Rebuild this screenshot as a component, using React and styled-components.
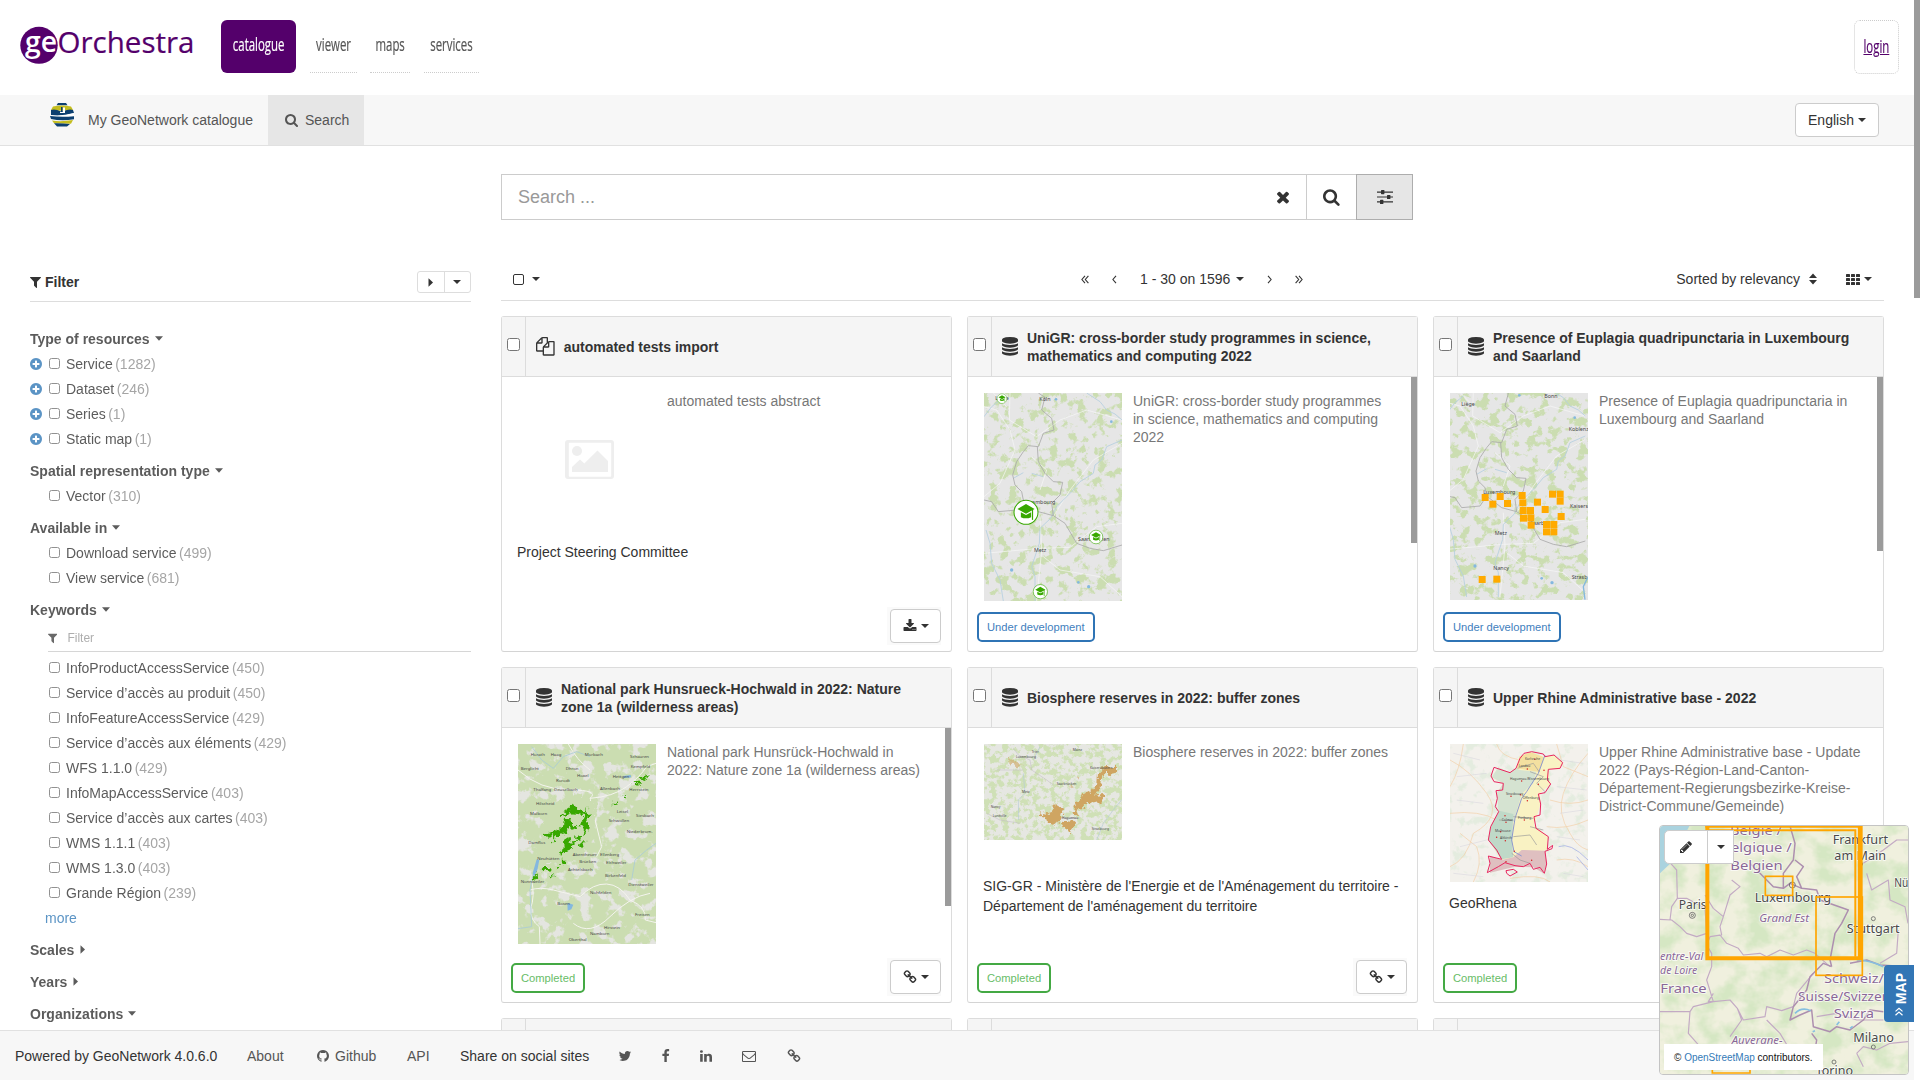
import React from "react";
import styled, { createGlobalStyle } from "styled-components";

const Global = createGlobalStyle`
  *, *::before, *::after { box-sizing: border-box; }
  html, body { margin: 0; padding: 0; overflow: hidden; background: #fff; }
  body { font: 14px/20px "Liberation Sans", Arial, sans-serif; color: #333; }
  button { font: inherit; color: inherit; cursor: pointer; }
  a { text-decoration: none; color: inherit; }
  svg { display: block; flex: none; }
`;

/* ---------- icons ---------- */

const PATHS = {
  search: "M1216 832q0-185-131.5-316.5t-316.5-131.5-316.5 131.5-131.5 316.5 131.5 316.5 316.5 131.5 316.5-131.5 131.5-316.5zm512 832q0 52-38 90t-90 38q-54 0-90-38l-343-342q-179 124-399 124-143 0-273.5-55.5t-225-150-150-225-55.5-273.5 55.5-273.5 150-225 225-150 273.5-55.5 273.5 55.5 225 150 150 225 55.5 273.5q0 220-124 399l343 343q37 37 37 90z",
  times: "M1490 1322q0 40-28 68l-136 136q-28 28-68 28t-68-28l-294-294-294 294q-28 28-68 28t-68-28l-136-136q-28-28-28-68t28-68l294-294-294-294q-28-28-28-68t28-68l136-136q28-28 68-28t68 28l294 294 294-294q28-28 68-28t68 28l136 136q28 28 28 68t-28 68l-294 294 294 294q28 28 28 68z",
  filter: "M1595 295q17 41-14 70l-493 493v742q0 42-39 59-13 5-25 5-27 0-45-19l-256-256q-19-19-19-45v-486l-493-493q-31-29-14-70 17-39 59-39h1280q42 0 59 39z",
  database: "M896 768q237 0 443-43t325-127v170q0 69-103 128t-280 93.5-385 34.5-385-34.5-280-93.5-103-128v-170q119 84 325 127t443 43zm0 768q237 0 443-43t325-127v170q0 69-103 128t-280 93.5-385 34.5-385-34.5-280-93.5-103-128v-170q119 84 325 127t443 43zm0-384q237 0 443-43t325-127v170q0 69-103 128t-280 93.5-385 34.5-385-34.5-280-93.5-103-128v-170q119 84 325 127t443 43zm0-1152q208 0 385 34.5t280 93.5 103 128v128q0 69-103 128t-280 93.5-385 34.5-385-34.5-280-93.5-103-128v-128q0-69 103-128t280-93.5 385-34.5z",
  files: "M1696 384q40 0 68 28t28 68v1216q0 40-28 68t-68 28h-960q-40 0-68-28t-28-68v-288h-544q-40 0-68-28t-28-68v-672q0-40 20-88t48-76l408-408q28-28 76-48t88-20h416q40 0 68 28t28 68v328q68-40 128-40h416zm-544 213l-299 299h299v-299zm-640-384l-299 299h299v-299zm196 647l316-316v-416h-384v416q0 40-28 68t-68 28h-416v640h512v-256q0-40 20-88t48-76zm956 804v-1152h-384v416q0 40-28 68t-68 28h-416v640h896z",
  plus: "M1344 960v-128q0-26-19-45t-45-19h-256v-256q0-26-19-45t-45-19h-128q-26 0-45 19t-19 45v256h-256q-26 0-45 19t-19 45v128q0 26 19 45t45 19h256v256q0 26 19 45t45 19h128q26 0 45-19t19-45v-256h256q26 0 45-19t19-45zm320-64q0 209-103 385.5t-279.5 279.5-385.5 103-385.5-103-279.5-279.5-103-385.5 103-385.5 279.5-279.5 385.5-103 385.5 103 279.5 279.5 103 385.5z",
  link: "M1520 1216q0-40-28-68l-208-208q-28-28-68-28-42 0-72 32 3 3 19 18.5t21.5 21.5 15 19 13 25.5 3.5 27.5q0 40-28 68t-68 28q-15 0-27.5-3.5t-25.5-13-19-15-21.5-21.5-18.5-19q-33 31-33 73 0 40 28 68l206 207q27 27 68 27 40 0 68-26l147-146q28-28 28-67zm-703-705q0-40-28-68l-206-207q-28-28-68-28-39 0-68 27l-147 146q-28 28-28 67 0 40 28 68l208 208q27 27 68 27 42 0 72-31-3-3-19-18.5t-21.5-21.5-15-19-13-25.5-3.5-27.5q0-40 28-68t68-28q15 0 27.5 3.5t25.5 13 19 15 21.5 21.5 18.5 19q33-31 33-73zm895 705q0 120-85 203l-147 146q-83 83-203 83-121 0-204-85l-206-207q-83-83-83-203 0-123 88-209l-88-88q-86 88-208 88-120 0-204-84l-208-208q-84-84-84-204t85-203l147-146q83-83 203-83 121 0 204 85l206 207q83 83 83 203 0 123-88 209l88 88q86-88 208-88 120 0 204 84l208 208q84 84 84 204z",
  twitter: "M1684 408q-67 98-162 167 1 14 1 42 0 130-38 259.5t-115.5 248.5-184.5 210.5-258 146-323 54.5q-271 0-496-145 35 4 78 4 225 0 401-138-105-2-188-64.5t-114-159.5q33 5 61 5 43 0 85-11-112-23-185.5-111.5t-73.5-205.5v-4q68 38 146 41-66-44-105-115t-39-154q0-88 44-163 121 149 294.5 238.5t371.5 99.5q-8-38-8-74 0-134 94.5-228.5t228.5-94.5q140 0 236 102 109-21 205-78-37 115-142 178 93-10 186-50z",
  facebook: "M1343 12v264h-157q-86 0-116 36t-30 108v189h293l-39 296h-254v759h-306v-759h-255v-296h255v-218q0-186 104-288.5t277-102.5q147 0 228 12z",
  linkedin: "M477 625v991h-330v-991h330zm21-306q1 73-50.5 122t-135.5 49h-2q-82 0-132-49t-50-122q0-74 51.5-122.5t134.5-48.5 133 48.5 51 122.5zm1166 729v568h-329v-530q0-105-40.5-164.5t-126.5-59.5q-63 0-105.5 34.5t-63.5 85.5q-11 30-11 81v553h-329q2-399 2-647t-1-296l-1-48h329v144h-2q20-32 41-56t56.5-52 87-43.5 114.5-15.5q171 0 275 113.5t104 332.5z",
  mail: "M1664 1504v-768q-32 36-69 66-268 206-426 338-51 43-83 67t-86.5 48.5-102.5 24.5h-2q-48 0-102.5-24.5t-86.5-48.5-83-67q-158-132-426-338-37-30-69-66v768q0 13 9.5 22.5t22.5 9.5h1472q13 0 22.5-9.5t9.5-22.5zm0-1051v-24.5l-.5-13-3-12.5-5.5-9-9-7.5-14-2.5h-1472q-13 0-22.5 9.5t-9.5 22.5q0 168 147 284 193 152 401 317 6 5 35 29.5t46 37.5 44.5 31.5 50.5 27.5 43 9h2q20 0 43-9t50.5-27.5 44.5-31.5 46-37.5 35-29.5q208-165 401-317 54-43 100.5-115.5t46.5-131.5zm128-37v1088q0 66-47 113t-113 47h-1472q-66 0-113-47t-47-113v-1088q0-66 47-113t113-47h1472q66 0 113 47t47 113z",
  github: "M896 128q209 0 385.5 103t279.5 279.5 103 385.5q0 251-146.5 451.5t-378.5 277.5q-27 5-40-7t-13-30q0-3 .5-76.5t.5-134.5q0-97-52-142 57-6 102.5-18t94-39 81-66.5 53-105 20.5-150.5q0-119-79-206 37-91-8-204-28-9-81 11t-92 44l-38 24q-93-26-192-26t-192 26q-16-11-42.5-27t-83.5-38.5-85-13.5q-45 113-8 204-79 87-79 206 0 85 20.5 150t52.5 105 80.5 67 94 39 102.5 18q-39 36-49 103-21 10-45 15t-57 5-65.5-21.5-55.5-62.5q-19-32-48.5-52t-49.5-24l-20-3q-21 0-29 4.5t-5 11.5 9 14 13 12l7 5q22 10 43.5 38t31.5 51l10 23q13 38 44 61.5t67 30 69.5 7 55.5-3.5l23-4q0 38 .5 88.5t.5 54.5q0 18-13 30t-40 7q-232-77-378.5-277.5t-146.5-451.5q0-209 103-385.5t279.5-279.5 385.5-103z",
  pencil: "M491 1536l91-91-235-235-91 91v107h128v128h107zm523-928q0-22-22-22-10 0-17 7l-542 542q-7 7-7 17 0 22 22 22 10 0 17-7l542-542q7-7 7-17zm-54-192l416 416-832 832h-416v-416zm683 96q0 53-37 90l-166 166-416-416 166-165q36-38 90-38 53 0 91 38l235 234q37 39 37 91z",
  download: "M1344 1344q0-26-19-45t-45-19-45 19-19 45 19 45 45 19 45-19 19-45zm256 0q0-26-19-45t-45-19-45 19-19 45 19 45 45 19 45-19 19-45zm128-224v320q0 40-28 68t-68 28h-1472q-40 0-68-28t-28-68v-320q0-40 28-68t68-28h465l135 136q58 56 136 56t136-56l136-136h464q40 0 68 28t28 68zm-325-569q17 41-14 70l-448 448q-18 19-45 19t-45-19l-448-448q-31-29-14-70 17-39 59-39h256v-448q0-26 19-45t45-19h256q26 0 45 19t19 45v448h256q42 0 59 39z",
};

const BOXES = {
  database: "128 0 1536 1792",
  filter: "192 0 1408 1792",
  plus: "128 0 1536 1792",
  facebook: "430 0 1024 1792",
  search: "64 0 1664 1792",
};

function Icon({ name, size = 14 }) {
  const box = BOXES[name] || "0 0 1792 1792";
  const w = (Number(box.split(" ")[2]) / 1792) * size;
  return (
    <svg width={w} height={size} viewBox={box} fill="currentColor">
      <path d={PATHS[name]} />
    </svg>
  );
}

const Caret = ({ dir = "down", bold }) =>
  dir === "down" ? (
    <svg width="8" height={bold ? 5 : 4} viewBox={bold ? "0 0 8 5" : "0 0 8 4"} fill="currentColor"><path d={bold ? "M0 .3h8L4 4.700z" : "M0 0h8L4 4z"} /></svg>
  ) : (
    <svg width="7" height="9" viewBox="0 0 7 9" fill="currentColor"><path d="M1.500 .3v8.400L6 4.500z" /></svg>
  );

const Angle = ({ right, double }) => (
  <svg width={double ? 8 : 5} height="9" viewBox={double ? "0 0 8 9" : "0 0 5 9"} fill="none" stroke="currentColor" strokeWidth="1.1">
    <g transform={right ? `translate(${double ? 8 : 5} 0) scale(-1 1)` : undefined}>
      <path d="M4 .8L.9 4.5L4 8.2" />
      {double && <path d="M7.4 .8L4.3 4.5L7.4 8.2" />}
    </g>
  </svg>
);

const SortIcon = () => (
  <svg width="8" height="12" viewBox="0 0 8 12" fill="currentColor"><path d="M0 5L4 .6L8 5zM0 7h8L4 11.4z" /></svg>
);

const GridIcon = () => (
  <svg width="14" height="11" viewBox="0 0 14 11" fill="currentColor">
    {[0, 4, 8].map((y) => [0, 5, 10].map((x) => <rect key={x + "-" + y} x={x} y={y} width="4" height="3" rx=".6" />))}
  </svg>
);

const SlidersIcon = () => (
  <svg width="16" height="14" viewBox="0 0 16 14" fill="currentColor">
    <path d="M0 1.500h16v1.200H0zM0 6.400h16v1.200H0zM0 11.300h16v1.200H0z" />
    <rect x="4" y="0" width="3.400" height="4.200" rx=".6" />
    <rect x="10" y="4.900" width="3.400" height="4.200" rx=".6" />
    <rect x="3" y="9.800" width="3.400" height="4.200" rx=".6" />
  </svg>
);

const PictureIcon = () => (
  <svg width="49" height="39" viewBox="0 0 49 39" fill="#eee">
    <path fillRule="evenodd" d="M3 0h43a3 3 0 0 1 3 3v33a3 3 0 0 1-3 3H3a3 3 0 0 1-3-3V3a3 3 0 0 1 3-3zM3.8 3v33a.7.7 0 0 0 .7.7h41a.7.7 0 0 0 .7-.7V3.5a.7.7 0 0 0-.7-.7h-41a.7.7 0 0 0-.7.7z" />
    <circle cx="12" cy="11" r="5" />
    <path d="M7 32v-5l8-7.5 4.3 4L32.5 10.5L43 21v11z" />
  </svg>
);

const GeorchestraLogo = () => (
  <svg width="176" height="50" viewBox="0 -8 176 50" fontFamily='"Open Sans", sans-serif' overflow="visible">
    <ellipse cx="19" cy="21.3" rx="18.7" ry="18.5" fill="#54006b" />
    <text x="5" y="28" fontSize="28" fontWeight="600" fill="#fff" textLength="32" lengthAdjust="spacingAndGlyphs">ge</text>
    <text x="37.5" y="28.600" fontSize="29" fill="#54006b" stroke="#54006b" strokeWidth=".2" textLength="137" lengthAdjust="spacingAndGlyphs">Orchestra</text>
  </svg>
);

const GlobeLogo = () => (
  <svg width="26" height="24" viewBox="0 0 26 24">
    <path d="M9 0h8l1.5 2.2h-11z" fill="#0c3f70" />
    <path d="M4 3.500Q13 1.500 22 3.500L24 7Q13 8.500 2 7z" fill="#c4bd1e" />
    <path d="M2 7Q6 5.500 12 8.500h2Q20 5.500 24 7L25 10Q14 14 2 12.300z" fill="#0c3f70" />
    <path d="M2 12Q12 13.500 25 10V13.500Q13 14 1 14z" fill="#fff" />
    <path d="M1 13Q12 14.500 25 13.300V16.200Q13 18.500 2 16z" fill="#0c3f70" />
    <path d="M3 17.500Q12 19 24 17L22 20.800Q12 20.500 5 20.200z" fill="#c4bd1e" />
    <path d="M5 20.200Q13 20 21 21L18 23.500H8z" fill="#0c3f70" />
    <path d="M12 4h1.500v6H12z" fill="#0c3f70" /><path d="M14 4.500h2v5.500h-5v-1h3z" fill="#fff" />
  </svg>
);

/* ---------- map drawings ---------- */

function Terrain({ id, box, base, cover, freq, seed, gain = 14, cut = 7.2, children }) {
  const [x, y, width, height] = box;
  return (
    <svg width={width / 3} height={height / 3} viewBox={box.join(" ")} fontFamily='"Noto Sans", sans-serif'>
      <filter id={id} x="0" y="0" width="100%" height="100%" colorInterpolationFilters="sRGB">
        <feTurbulence type="fractalNoise" baseFrequency={freq} numOctaves="4" seed={seed} />
        <feColorMatrix values={`0 0 0 0 ${cover[0]} 0 0 0 0 ${cover[1]} 0 0 0 0 ${cover[2]} ${gain} 0 0 0 ${-cut}`} />
      </filter>
      <filter id={`${id}-rough`} x="-5%" y="-5%" width="110%" height="110%">
        <feTurbulence type="fractalNoise" baseFrequency="0.07" numOctaves="2" seed={seed} result="n" />
        <feDisplacementMap in="SourceGraphic" in2="n" scale="26" xChannelSelector="R" yChannelSelector="G" />
      </filter>
      <rect x={x} y={y} width={width} height={height} fill={base} />
      <rect x={x} y={y} width={width} height={height} filter={`url(#${id})`} />
      {children}
    </svg>
  );
}

const FOREST = [0.796, 0.867, 0.694];

const Cap = ({ x, y, r }) => (
  <g transform={`translate(${x} ${y}) scale(${r / 36})`}>
    <circle r="35" fill="#fff" stroke="#38a800" strokeWidth="3" />
    <path d="M0-24L25-10L0 4L-25-10zM-15 0L0 8L15 0V14Q0 21-15 14z" fill="#38a800" />
    <path d="M19-9V22" stroke="#38a800" strokeWidth="3.500" />
  </g>
);

const Tags = ({ items, size = 16 }) =>
  items.map(([t, x, y]) => (
    <text key={t + x} x={x} y={y} fontSize={size} fill="#444">{t}</text>
  ));

const Borders = () => (
  <g fill="none" strokeLinejoin="round">
    <g stroke="#f7f7f7" strokeWidth="2">
      <path d="M72 290L110 300L150 360L165 420L120 520L72 560M150 249L148 330L230 380L300 330L380 300L486 330M240 540L260 480L215 440M240 620L245 720L230 873M72 730L240 715L330 712L410 650L486 640M250 740L300 780L420 800L486 860M280 620L330 540L400 450L486 400M100 249L140 290" />
    </g>
    <g stroke="#b4cfe0" strokeWidth="2.500">
      <path d="M72 320L95 290L120 270M380 249L420 275L440 300L465 312L486 330M486 390L440 410L425 450L405 465L400 490L360 515L335 545L290 590L272 625L240 655L238 700L215 770L225 800L225 873M78 660L90 700L95 760L120 810L130 873M160 505L190 488M215 490L250 500" />
    </g>
    <g stroke="#aaa" strokeWidth="2.500">
      <path d="M235 249L255 262L245 300L275 325L282 360L250 370L235 410L205 407L190 425L170 455L158 495L165 525L185 545L190 570L170 600L115 605L95 575L72 570M190 570L235 605L280 617L275 580L300 555L308 517L280 515L255 490L235 455L232 410M280 617L315 640L350 700L390 715L430 722L486 705" />
    </g>
    <g fill="#84b8df"><circle cx="288" cy="268" r="4" /><circle cx="454" cy="335" r="4" /><circle cx="155" cy="780" r="5" /><circle cx="355" cy="817" r="4" /><circle cx="386" cy="830" r="5" /></g>
  </g>
);

const UniThumb = () => (
  <Terrain id="t-uni" box={[72, 249, 414, 624]} base="#e6e6e6" cover={FOREST} freq="0.034" seed="4" gain={9} cut={4.700}>
    <Borders />
    <Tags items={[["Liège", 106, 271], ["Köln", 238, 272], ["Luxembourg", 190, 581], ["Saarbrücken", 354, 693], ["Metz", 222, 726]]} />
    <Cap x={126} y={266} r={15} /><Cap x={198} y={607} r={37} /><Cap x={408} y={681} r={21} /><Cap x={241} y={845} r={22} />
  </Terrain>
);

const SQUARES = [[196, 563], [241, 560], [219, 583], [263, 581], [307, 557], [309, 579], [310, 602], [332, 602], [311, 625], [333, 624], [334, 646], [353, 577], [376, 599], [398, 553], [421, 553], [421, 574], [424, 620], [380, 644], [402, 644], [380, 666], [402, 666], [187, 809], [231, 808]];

const EuplagiaThumb = () => (
  <Terrain id="t-eup" box={[90, 249, 414, 621]} base="#e6e6e6" cover={FOREST} freq="0.034" seed="11" gain={9} cut={4.700}>
    <g transform="translate(10 -12)"><Borders /></g>
    <Tags items={[["Liège", 124, 288], ["Bonn", 373, 264], ["Koblenz", 446, 362], ["Luxembourg", 190, 551], ["Kaisers", 450, 593], ["Saarbr", 330, 645], ["Metz", 224, 674], ["Nancy", 220, 780], ["Strasb", 455, 806]]} />
    {SQUARES.map(([x, y]) => <rect key={`${x}-${y}`} x={x - 11} y={y - 11} width="21" height="21" fill="#ffaa00" />)}
    <path d="M504 800L490 830L495 869" stroke="#84b8df" strokeWidth="4" fill="none" />
  </Terrain>
);

const ParkThumb = () => (
  <Terrain id="t-park" box={[84, 252, 414, 600]} base="#cbddb1" cover={[0.894, 0.898, 0.878]} freq="0.026" seed="23" gain={9} cut={4.800}>
    <g fill="none" stroke="#f4f4ee" strokeWidth="3">
      <path d="M120 690Q150 680 190 690T270 710Q310 670 350 672T420 720Q470 740 466 780L498 788M125 660Q135 710 122 745Q120 780 148 800L150 852M84 330Q150 390 240 390T300 415Q320 500 335 560L320 590M300 415Q370 410 410 380T470 320L498 310M250 790Q300 830 360 770T480 700M235 252Q260 300 300 330" />
    </g>
    <path d="M180 440L260 400L320 430L310 520L270 590L200 610L150 620L150 520z" fill="#cbddb1" filter="url(#t-park-rough)" />
    <g fill="none" stroke="#a9cbd6" strokeWidth="2.500"><path d="M125 260L155 300L190 325L220 290L260 275L300 290M145 600L130 640L120 690L125 800L84 806M425 660L435 600L470 570L498 550" /></g>
    <path d="M140 598L148 600L142 630L132 650L128 640zM232 728L250 734L244 748L233 752zM400 348L422 345L424 352L402 354z" fill="#84b8df" />
    <g fill="#38a800" filter="url(#t-park-rough)">
      <path d="M240 440L258 436L262 448L280 455L292 440L285 465L240 460L215 470L212 462L236 452zM222 476L245 478L246 492L260 498L252 510L238 500L232 520L210 525L188 545L192 525L170 530L162 522L195 514L218 500zM288 460L302 462L292 480L296 500L290 520L276 525L284 500L262 498L275 488zM230 534L246 545L280 540L250 552L236 570L212 588L218 562L216 545zM255 530L270 525L276 538L258 540zM280 545L290 542L272 566L264 560zM214 602L232 602L226 612L214 612zM165 618L184 618L180 628L190 630L168 632L156 640L155 626zM142 640L146 650L130 668L124 658zM175 642L195 648L180 650zM198 622L212 620L200 628zM428 366L454 370L452 374L430 372zM452 358L474 346L470 356L458 362zM366 432L384 424L378 436zM400 410L408 404L408 412z" />
    </g>
    <Tags size={13} items={[["Horath", 122, 287], ["Haag", 182, 289], ["Morbach", 284, 288], ["Berglicht", 92, 331], ["Dhron", 227, 330], ["Schauren", 420, 294], ["Kempfeld", 422, 324], ["Hoxel", 261, 350], ["Rorodt", 198, 365], ["Hettgen", 368, 353], ["Thalfang", 130, 393], ["Deuselbach", 192, 394], ["Allenbach", 330, 390], ["Herrstein", 418, 392], ["Hilscheid", 138, 435], ["Malborn", 120, 465], ["Leisel", 380, 459], ["Schwollen", 356, 485], ["Siesbach", 438, 470], ["Niederbrom.", 410, 519], ["Damflos", 115, 553], ["Neuhütten", 142, 600], ["Abentheuer", 248, 588], ["Brücken", 268, 609], ["Achtelsbach", 234, 634], ["Ellenberg", 330, 588], ["Elchweiler", 348, 611], ["Birkenfeld", 345, 650], ["Nonnweiler", 92, 668], ["Dienstweiler", 415, 679], ["Nohfelden", 300, 703], ["Bosen", 202, 734], ["Freisen", 435, 767], ["Hirstein", 342, 807], ["Namborn", 300, 825], ["Oberthal", 236, 843]]} />
  </Terrain>
);

const ReserveThumb = () => (
  <Terrain id="t-res" box={[72, 252, 414, 288]} base="#e6e7e2" cover={[0.812, 0.878, 0.714]} freq="0.055" seed="8" gain={7} cut={3.200}>
    <g fill="none" stroke="#b7ccd6" strokeWidth="2"><path d="M190 340L195 400L175 420L176 480M486 418L460 450L430 490L410 540M220 300L240 260" /></g>
    <g fill="none" stroke="#c0b8c4" strokeWidth="1.500"><path d="M160 265L175 285L210 300L215 330L260 360L280 375M110 330L190 330M80 460L120 480L180 490M290 475L360 475" /></g>
    <g fill="#cfa562" filter="url(#t-res-rough)">
      <path d="M438 318L444 325L452 320L468 322L468 338L450 342L438 335L426 352L422 385L408 405L385 432L355 450L350 468L340 465L345 440L335 432L358 425L365 405L400 388L412 370L414 340zM400 405L432 402L425 425L404 430L392 420zM285 430L296 436L308 455L300 485L285 494L264 490L258 470L238 468L242 456L262 460L278 455zM312 482L330 485L345 482L342 500L330 518L316 510L306 495z" />
      <path d="M148 290L158 296L155 312L148 308zM160 305L185 312L175 322L160 318zM352 355l8-6v8zM330 382l12 4-8 4z" opacity=".6" />
    </g>
    <Tags size={10} items={[["Luxembourg", 168, 294], ["Trier", 215, 278], ["Kaiserslautern", 390, 328], ["Saarbrücken", 290, 374], ["Metz", 186, 398], ["Nancy", 92, 444], ["Lunéville", 98, 471], ["Strasbourg", 395, 509], ["Mainz", 338, 272], ["Haguenau", 306, 477]]} />
  </Terrain>
);

const RhineThumb = () => (
  <Terrain id="t-rhine" box={[60, 252, 414, 414]} base="#f3f1ec" cover={[0.894, 0.925, 0.875]} freq="0.03" seed="15" gain={6} cut={3.200}>
    <g fill="none" stroke="#f3cfa6" strokeWidth="2">
      <path d="M60 300Q120 330 170 400T130 520Q110 600 60 620M100 252Q90 330 60 380M60 460Q150 450 200 480M130 666Q160 610 140 560L90 520M474 280Q420 340 400 400T420 520Q440 560 474 570M380 252L400 320L474 350M360 420Q420 440 474 420M350 500Q410 510 474 480M380 600Q430 590 474 620M200 252Q210 290 270 300M360 666Q330 640 240 655" />
    </g>
    <g fill="none" stroke="#d5d3dc" strokeWidth="1.500"><path d="M70 280L150 300M80 350L170 340M80 420L160 430M90 560L170 540M390 300L460 310M380 380L470 390M390 460L460 450M380 530L450 540M70 640L160 650M400 640L460 650" /></g>
    <path d="M205 322L240 338L258 325L268 290L300 276L345 292L372 285L398 308L388 328L355 328L362 372L330 400L332 432L312 495L355 530L350 570L320 575L252 595L215 600L175 540L182 500L208 455L200 400L220 370L185 352z" fill="#f9f2c3" />
    <path d="M205 322L240 338L258 325L270 330L318 335L310 370L275 402L258 460L252 485L208 480L205 450L200 400L220 370L185 352z" fill="#d5e3d1" />
    <path d="M208 452L250 462L246 550L250 592L215 598L175 540L182 500z" fill="#bfd9c8" />
    <path d="M268 290L300 276L343 292L328 336L262 325z" fill="#f3e0a0" />
    <path d="M180 588L215 600L250 592L275 570L345 572L350 612L340 640L310 622L255 620L180 638z" fill="#dfbfc0" />
    <path d="M345 285L325 340L290 395L275 415L255 475L245 540L252 575L275 588" fill="none" stroke="#8c98cf" strokeWidth="3" />
    <path d="M300 500L340 510M250 470L310 475M300 335L340 350L320 370L345 395M250 530L300 525L320 555M262 325L310 310L328 336M245 580L270 600L300 610M207 480L250 482" fill="none" stroke="#999" strokeWidth="2" />
    <path d="M282 280L305 275L340 282L345 290L372 285L398 308L390 325L355 328L352 360L362 372L345 398L325 402L332 432L330 465L312 470L318 505L355 530L352 568L368 556L366 566L345 574L350 612L343 640L330 622L310 628L300 610L280 620L255 617L225 608L205 620L172 638L180 610L175 588L215 598L200 570L175 540L182 500L206 455L196 440L202 415L198 392L218 390L220 370L192 365L183 348L192 322L240 338L258 325L270 295zM228 632L250 628L262 636L240 648L230 640z" fill="none" stroke="#e8265f" strokeWidth="3" />
    <path d="M386 560Q420 545 474 600M440 590L474 630" fill="none" stroke="#a9b4e6" strokeWidth="2.500" />
    <g fill="#d21f1f">{[[275, 363], [243, 409], [271, 404], [292, 422], [325, 373], [342, 331], [292, 327], [314, 298], [225, 467], [228, 487], [283, 480], [212, 515], [200, 532], [226, 542], [253, 574], [228, 605], [305, 601]].map(([x, y]) => <circle key={x + "_" + y} cx={x} cy={y} r="2.200" />)}</g>
    <Tags size={10} items={[["Haguenau-Wissembourg", 240, 360], ["Karlsruhe", 285, 300], ["Strasbourg", 228, 404], ["Offenburg", 278, 418], ["Colmar", 215, 482], ["Freiburg", 264, 478], ["Mulhouse", 195, 515], ["Landau", 266, 322], ["Altkirch", 210, 538]]} />
  </Terrain>
);

const Halo = ({ x, y, w, size = 40, color = "#4a4a4a", italic, children }) => (
  <text x={x} y={y} fontSize={size} textLength={w} lengthAdjust="spacingAndGlyphs" fill={color}
    fontStyle={italic ? "italic" : "normal"} stroke="#fff" strokeOpacity=".8" strokeWidth="5" paintOrder="stroke">{children}</text>
);

const MapDrawing = () => (
  <Terrain id="t-map" box={[30, 18, 744, 744]} base="#f0f0de" cover={[0.835, 0.905, 0.765]} freq="0.014 0.016" seed="6" gain={3.200} cut={1.250}>
    <path d="M30 18H118L95 62L70 100L62 130L30 160z" fill="#aad3df" />
    <g fill="none" stroke="#c3aac4" strokeWidth="3.500" strokeLinejoin="round">
      <path d="M62 130L80 150L82 235L110 235L165 265L170 340L140 350L110 340L90 320L65 300L30 298M82 235L65 260L60 300M165 225L190 265L220 290L210 320L215 345L180 350L170 375L185 400L185 440L170 480L190 545L175 545L190 520M220 290L240 225L270 200L245 180M180 350L210 345L230 370L265 385L280 405L330 400L350 410L390 390L430 405L470 390L495 400L540 440M490 460L440 520L430 560L395 572L350 560L345 590L280 600L262 565L240 540L190 545L130 560L120 575L30 575M262 565L275 600L240 650M120 575L115 640L150 680M350 600L390 640L420 690M650 160L665 210L715 180L720 240L765 260L774 310M640 130L700 90L740 60L774 60M745 330L740 400L690 430M620 700L640 680L680 690L720 670L774 665M620 700L640 740M500 590L560 580L620 600L700 600" />
    </g>
    <g fill="none" stroke="#ad8faf" strokeWidth="4.500" strokeLinejoin="round">
      <path d="M300 130L330 160L370 200L400 205L420 190L455 205L500 210L510 240L595 270L575 310L555 340L540 420L545 440M400 205L400 160L430 120L435 70L420 18M455 205L440 170L460 140L435 120M545 440L520 430L480 470L470 510L430 560L420 600L450 585L485 570L490 620L540 635L560 620L600 630L640 600L660 570L700 575M485 640L500 660L495 690L520 762M600 430L650 420L690 435L774 440" />
    </g>
    <g fill="none" stroke="#85bfe0" strokeWidth="5"><path d="M435 580Q455 560 482 572M620 420Q660 420 700 440M488 635L495 632M560 615L568 605M600 625l8-6M740 600l8-8" /></g>
    <Halo x={240} y={44} w={156} color="#8a6897">België /</Halo>
    <Halo x={243} y={97} w={182} color="#8a6897">elgique /</Halo>
    <Halo x={241} y={149} w={157} color="#8a6897">Belgien</Halo>
    <Halo x={548} y={73} w={166}>Frankfurt</Halo>
    <Halo x={553} y={120} w={155}>am Main</Halo>
    <Halo x={733} y={202} w={42}>Nü</Halo>
    <Halo x={314} y={247} w={229}>Luxembourg</Halo>
    <Halo x={86} y={267} w={84}>Paris</Halo>
    <Halo x={328} y={306} w={149} size={34} italic color="#8a6897">Grand Est</Halo>
    <Halo x={590} y={340} w={159}>Stuttgart</Halo>
    <Halo x={30} y={421} w={130} size={34} italic color="#8a6897">entre-Val</Halo>
    <Halo x={30} y={462} w={112} size={34} italic color="#8a6897">de Loire</Halo>
    <Halo x={31} y={518} w={139} color="#8a6897">France</Halo>
    <Halo x={522} y={490} w={180} color="#8a6897">Schweiz/</Halo>
    <Halo x={444} y={542} w={290} color="#8a6897">Suisse/Svizzera</Halo>
    <Halo x={551} y={594} w={121} color="#8a6897">Svizra</Halo>
    <Halo x={610} y={667} w={122}>Milano</Halo>
    <Halo x={245} y={673} w={153} size={34} italic color="#8a6897">Auvergne-</Halo>
    <Halo x={497} y={765} w={112}>Torino</Halo>
    <g fill="none" stroke="#666" strokeWidth="2.500">
      <circle cx="127" cy="286" r="9" /><circle cx="127" cy="286" r="3.500" /><circle cx="427" cy="195" r="9" />
      <circle cx="670" cy="296" r="6" /><circle cx="670" cy="681" r="6" /><circle cx="552" cy="726" r="6" /><circle cx="633" cy="132" r="5" />
    </g>
    <g fill="none" stroke="#ffa500">
      <path d="M172 12V415H632V12" strokeWidth="12" /><path d="M166 20H632" strokeWidth="6" />
      <path d="M172 31H616V410" strokeWidth="6" /><path d="M626 18V415" strokeWidth="5" />
      <rect x="346" y="169" width="82" height="57" strokeWidth="5" />
      <rect x="498" y="231" width="139" height="235" strokeWidth="5" />
      <path d="M187 740V759H300V740" strokeWidth="5" />
    </g>
  </Terrain>
);

/* ---------- page frame ---------- */

const Screen = styled.div`
  display: grid;
  grid-template-columns: 1fr 6px;
  width: 1920px;
  height: 1080px;
  overflow: hidden;
  background: #fff;
`;
const Page = styled.div`
  display: flex;
  flex-direction: column;
  min-width: 0;
  height: 1080px;
  position: relative;
`;
const ScrollThumb = styled.div`
  width: 6px;
  flex: none;
  height: ${(p) => p.$h}px;
  background: #9b9b9b;
`;

const TopBar = styled.header`
  flex: none;
  height: 95px;
  display: flex;
  align-items: flex-start;
  padding: 20px 15px 0 20px;
`;
const LogoLink = styled.a`
  margin-top: -4px;
  width: 201px;
`;
const TopLink = styled.a`
  width: ${(p) => p.$w}px;
  height: 53px;
  margin-right: ${(p) => p.$gap}px;
  display: flex;
  justify-content: center;
  padding-top: 12px;
  border-radius: ${(p) => (p.$active ? "6px" : "0")};
  background: ${(p) => (p.$active ? "#54006b" : "transparent")};
  color: ${(p) => (p.$active ? "#fff" : "#555")};
  border-bottom: ${(p) => (p.$active ? "0" : "1px dotted #ccc")};
`;
const Narrow = styled.span`
  font: 18px/24px "Open Sans", sans-serif;
  white-space: nowrap;
  display: block;
  transform: scaleX(0.635);
  -webkit-text-stroke: 0.2px currentColor;
`;
const Login = styled.a`
  margin-left: auto;
  width: 45px;
  height: 54px;
  border: 1px dotted #ccc;
  border-radius: 6px;
  display: flex;
  justify-content: center;
  padding-top: 13px;
  color: #54006b;
  text-decoration: underline;
`;

const NavBar = styled.nav`
  flex: none;
  height: 51px;
  background: #f7f7f7;
  border-bottom: 1px solid #e1e1e1;
  display: flex;
  align-items: stretch;
  padding: 0 35px 0 49px;
  color: #555;
`;
const Brand = styled.a`
  display: flex;
  gap: 13px;
  width: 219px;
  padding-top: 8px;
  line-height: 34px;
`;
const NavTab = styled.a`
  display: flex;
  align-items: center;
  gap: 7px;
  width: 96px;
  padding-left: 17px;
  background: #e6e6e6;
`;
const Btn = styled.button`
  display: flex;
  align-items: center;
  justify-content: center;
  gap: ${(p) => p.$gap ?? 4}px;
  width: ${(p) => p.$w}px;
  height: 34px;
  padding: 0;
  border: 1px solid #ccc;
  border-radius: 4px;
  background: #fff;
  color: #333;
`;
const LangSlot = styled.div`
  margin-left: auto;
  padding-top: 8px;
`;

const Main = styled.main`
  flex: 1;
  min-height: 0;
  overflow: hidden;
`;
const SearchRow = styled.div`
  display: flex;
  width: 912px;
  height: 46px;
  margin: 28px 0 40px 501px;
`;
const SearchInput = styled.div`
  flex: 1;
  display: flex;
  align-items: center;
  justify-content: space-between;
  border: 1px solid #ccc;
  padding: 0 14px 0 16px;
  font-size: 18px;
  color: #999;
  svg { color: #333; }
`;
const SearchBtn = styled.button`
  width: ${(p) => p.$w}px;
  display: flex;
  align-items: center;
  justify-content: center;
  padding: 0;
  background: ${(p) => (p.$on ? "#e6e6e6" : "#fff")};
  border: 1px solid ${(p) => (p.$on ? "#adadad" : "#ccc")};
  border-left-width: ${(p) => (p.$on ? 1 : 0)}px;
  border-right-width: ${(p) => (p.$on ? 1 : 0)}px;
`;

const Columns = styled.div`
  display: grid;
  grid-template-columns: 441px 1383px;
  column-gap: 30px;
  padding-left: 30px;
`;

/* ---------- facets ---------- */

const FilterHead = styled.div`
  height: 42px;
  padding-top: 3px;
  border-bottom: 1px solid #ddd;
  display: flex;
  align-items: center;
  gap: 4px;
  font-weight: bold;
`;
const MiniGroup = styled.div`
  margin-left: auto;
  display: flex;
  width: 54px;
  height: 22px;
  border: 1px solid #ddd;
  border-radius: 3px;
`;
const MiniBtn = styled.span`
  flex: 1;
  display: flex;
  align-items: center;
  justify-content: center;
  & + & { border-left: 1px solid #ddd; }
`;
const Facets = styled.div`
  padding-top: 17px;
  opacity: 0.8;
`;
const FacetTitle = styled.div`
  height: 25px;
  margin-top: 7px;
  display: flex;
  align-items: center;
  gap: 5px;
  font-weight: bold;
`;
const FacetItem = styled.label`
  height: 25px;
  display: flex;
  align-items: center;
  white-space: pre;
`;
const Toggle = styled.span`
  width: 19px;
  color: #337ab7;
`;
const Check = styled.input.attrs({ type: "checkbox" })`
  width: ${(p) => p.$s || 11}px;
  height: ${(p) => p.$s || 11}px;
  margin: 0 ${(p) => (p.$s ? 0 : 6)}px 0 0;
  flex: none;
`;
const Count = styled.span`
  color: #8f8f8f;
  padding-left: 2.5px;
`;
const FacetFilter = styled.div`
  height: 30px;
  padding-top: 2px;
  margin: 0 0 3px 18px;
  border-bottom: 1px solid #ccc;
  display: flex;
  align-items: center;
  gap: 10px;
  font-size: 12px;
  color: #999;
  svg { color: #444; }
`;
const More = styled.a`
  display: block;
  height: 25px;
  line-height: 27px;
  padding-left: 15px;
  color: #337ab7;
`;

/* ---------- results ---------- */

const Toolbar = styled.div`
  height: 41px;
  padding: 0 12px 2px 12px;
  border-bottom: 1px solid #ddd;
  display: grid;
  grid-template-columns: 568px 1fr auto;
  align-items: center;
`;
const Group = styled.div`
  display: flex;
  align-items: center;
  gap: ${(p) => p.$gap}px;
`;
const SelectAll = styled.span`
  width: 11px;
  height: 11px;
  border: 1px solid #333;
  border-radius: 2px;
`;
const Cards = styled.div`
  margin-top: 15px;
  display: grid;
  grid-template-columns: repeat(3, 451px);
  gap: 15px;
`;
const CardBox = styled.article`
  height: 336px;
  display: flex;
  flex-direction: column;
  border: 1px solid #dcdcdc;
  border-bottom-color: #d4d4d4;
  border-radius: 3px;
  background: #fff;
`;
const CardHead = styled.div`
  flex: none;
  height: 60px;
  display: flex;
  background: #f5f5f5;
  border-bottom: 1px solid #dcdcdc;
`;
const CheckCell = styled.div`
  width: 24px;
  border-right: 1px solid #dcdcdc;
  padding: 21px 0 0 5px;
  line-height: 0;
`;
const CardTitle = styled.h3`
  flex: 1;
  margin: 0;
  display: flex;
  align-items: center;
  gap: 9px;
  padding: 0 25px 0 10px;
  font-size: 14px;
  line-height: 18px;
`;
const CardBody = styled.div`
  flex: 1;
  min-height: 0;
  display: flex;
  justify-content: space-between;
`;
const CardContent = styled.div`
  padding: 16px 0 0 16px;
`;
const Media = styled.div`
  display: flex;
  align-items: flex-start;
  gap: 11px;
  height: ${(p) => p.$h}px;
`;
const Thumb = styled.div`
  width: 138px;
  flex: none;
`;
const NoThumb = styled.div`
  width: 138px;
  height: 133px;
  display: flex;
  align-items: center;
  padding-left: 47px;
`;
const Abstract = styled.p`
  margin: -1px 0 0;
  width: 262px;
  line-height: 18px;
  color: #777;
`;
const Org = styled.div`
  margin-left: -1px;
  width: 420px;
`;
const CardFoot = styled.div`
  flex: none;
  height: 45px;
  padding: 0 10px 6px 9px;
  display: flex;
  justify-content: space-between;
  align-items: flex-end;
`;
const Badge = styled.span`
  height: 30px;
  margin-bottom: 3px;
  padding: 0 8px;
  border: 2px solid ${(p) => (p.$done ? "#44a944" : "#2f74b5")};
  border-radius: 5px;
  color: ${(p) => (p.$done ? "#68bd68" : "#3f80bd")};
  font-size: 11.2px;
  line-height: 26px;
`;
const LinkSlot = styled.div`
  margin-left: auto;
  background: #fafafa;
  padding: 2px 0 2px 3px;
`;

/* ---------- footer and map ---------- */

const Footer = styled.footer`
  flex: none;
  height: 50px;
  background: #f7f7f7;
  border-top: 1px solid #e1e1e1;
  display: flex;
  align-items: center;
  padding: 0 15px 0;
  color: #555;
`;
const FootItem = styled.span`
  display: flex;
  align-items: center;
  gap: 5px;
  width: ${(p) => p.$w}px;
  white-space: nowrap;
  color: ${(p) => (p.$dark ? "#333" : "#555")};
`;
const MapPanel = styled.div`
  position: absolute;
  right: 5px;
  bottom: 5px;
  width: 250px;
  height: 250px;
  border: 1px solid #c4c4c4;
  border-radius: 4px;
  overflow: hidden;
`;
const MapTools = styled.div`
  position: absolute;
  left: 4px;
  top: 4px;
  width: 70px;
  height: 34px;
  display: flex;
  background: #fff;
  border: 1px solid #ccc;
  border-radius: 5px 0 0 5px;
`;
const MapTool = styled.span`
  width: ${(p) => p.$w}px;
  display: flex;
  align-items: center;
  justify-content: center;
  & + & { border-left: 1px solid #ccc; }
`;
const Attribution = styled.div`
  position: absolute;
  left: 4px;
  bottom: 4px;
  width: 159px;
  height: 26px;
  padding-left: 10px;
  background: #fff;
  color: #111;
  font-size: 10px;
  line-height: 27px;
  white-space: nowrap;
  a { color: #337ab7; }
`;
const MapTab = styled.button`
  position: absolute;
  right: 0;
  top: 965px;
  width: 30px;
  height: 57px;
  padding: 0 0 6px;
  border: 0;
  border-radius: 4px 0 0 4px;
  background: #3276b5;
  color: #fff;
  font-weight: bold;
  display: flex;
  flex-direction: column;
  align-items: center;
  justify-content: flex-end;
  gap: 3px;
`;
const Vertical = styled.span`
  writing-mode: vertical-rl;
  transform: translateX(2px) rotate(180deg);
`;

/* ---------- data ---------- */

const FACETS = [
  { title: "Type of resources", nested: true, items: [["Service", 1282], ["Dataset", 246], ["Series", 1], ["Static map", 1]] },
  { title: "Spatial representation type", items: [["Vector", 310]] },
  { title: "Available in", items: [["Download service", 499], ["View service", 681]] },
  {
    title: "Keywords", filter: true, more: true,
    items: [["InfoProductAccessService", 450], ["Service d’accès au produit", 450], ["InfoFeatureAccessService", 429], ["Service d’accès aux éléments", 429], ["WFS 1.1.0", 429], ["InfoMapAccessService", 403], ["Service d’accès aux cartes", 403], ["WMS 1.1.1", 403], ["WMS 1.3.0", 403], ["Grande Région", 239]],
  },
  { title: "Scales", closed: true, items: [] },
  { title: "Years", closed: true, items: [] },
  { title: "Organizations", items: [] },
];

const CARDS = [
  { title: "automated tests import", icon: "files", abstract: "automated tests abstract", org: "Project Steering Committee", mediaH: 149, link: "download" },
  { title: "UniGR: cross-border study programmes in science, mathematics and computing 2022", abstract: "UniGR: cross-border study programmes in science, mathematics and computing 2022", thumb: UniThumb, scroll: 166, status: "Under development" },
  { title: "Presence of Euplagia quadripunctaria in Luxembourg and Saarland", abstract: "Presence of Euplagia quadripunctaria in Luxembourg and Saarland", thumb: EuplagiaThumb, scroll: 174, status: "Under development" },
  { title: "National park Hunsrueck-Hochwald in 2022: Nature zone 1a (wilderness areas)", abstract: "National park Hunsrück-Hochwald in 2022: Nature zone 1a (wilderness areas)", thumb: ParkThumb, scroll: 178, status: "Completed", link: "link" },
  { title: "Biosphere reserves in 2022: buffer zones", abstract: "Biosphere reserves in 2022: buffer zones", thumb: ReserveThumb, mediaH: 132, org: "SIG-GR - Ministère de l'Energie et de l'Aménagement du territoire - Département de l'aménagement du territoire", status: "Completed", link: "link" },
  { title: "Upper Rhine Administrative base - 2022", abstract: "Upper Rhine Administrative base - Update 2022 (Pays-Région-Land-Canton-Département-Regierungsbezirke-Kreise-District-Commune/Gemeinde)", thumb: RhineThumb, mediaH: 149, org: "GeoRhena", status: "Completed" },
];

function Facet({ title, items, nested, filter, more, closed }) {
  return (
    <section>
      <FacetTitle>{title}<Caret bold dir={closed ? "right" : "down"} /></FacetTitle>
      {filter && <FacetFilter><Icon name="filter" size={12} />Filter</FacetFilter>}
      {items.map(([label, n]) => (
        <FacetItem key={label}>
          <Toggle>{nested && <Icon name="plus" />}</Toggle>
          <Check />{label}<Count>({n})</Count>
        </FacetItem>
      ))}
      {more && <More>more</More>}
    </section>
  );
}

function Card({ title, icon = "database", abstract, org, thumb: Drawing, mediaH, scroll, status, link }) {
  return (
    <CardBox>
      <CardHead>
        <CheckCell><Check $s={13} /></CheckCell>
        <CardTitle><Icon name={icon} size={18.67} /><span>{title}</span></CardTitle>
      </CardHead>
      <CardBody>
        <CardContent>
          <Media $h={mediaH || 208}>
            {Drawing ? <Thumb><Drawing /></Thumb> : <NoThumb><PictureIcon /></NoThumb>}
            <Abstract>{abstract}</Abstract>
          </Media>
          {org && <Org>{org}</Org>}
        </CardContent>
        {scroll && <ScrollThumb $h={scroll} />}
      </CardBody>
      <CardFoot>
        {status && <Badge $done={status === "Completed"}>{status}</Badge>}
        {link && <LinkSlot><Btn $w={51} $gap={4}><Icon name={link} /><Caret /></Btn></LinkSlot>}
      </CardFoot>
    </CardBox>
  );
}

export default function App() {
  return (
    <>
      <Global />
      <Screen>
        <Page>
          <TopBar>
            <LogoLink><GeorchestraLogo /></LogoLink>
            <TopLink $active $w={75} $gap={14}><Narrow>catalogue</Narrow></TopLink>
            <TopLink $w={47} $gap={13}><Narrow>viewer</Narrow></TopLink>
            <TopLink $w={40} $gap={14}><Narrow>maps</Narrow></TopLink>
            <TopLink $w={55} $gap={0}><Narrow>services</Narrow></TopLink>
            <Login><Narrow>login</Narrow></Login>
          </TopBar>
          <NavBar>
            <Brand><GlobeLogo />My GeoNetwork catalogue</Brand>
            <NavTab><Icon name="search" />Search</NavTab>
            <LangSlot><Btn $w={84}>English<Caret /></Btn></LangSlot>
          </NavBar>
          <Main>
            <SearchRow>
              <SearchInput>Search ...<Icon name="times" size={18} /></SearchInput>
              <SearchBtn $w={49}><Icon name="search" size={18} /></SearchBtn>
              <SearchBtn $w={57} $on><SlidersIcon /></SearchBtn>
            </SearchRow>
            <Columns>
              <aside>
                <FilterHead>
                  <Icon name="filter" />Filter
                  <MiniGroup><MiniBtn><Caret dir="right" /></MiniBtn><MiniBtn><Caret /></MiniBtn></MiniGroup>
                </FilterHead>
                <Facets>{FACETS.map((f) => <Facet key={f.title} {...f} />)}</Facets>
              </aside>
              <section>
                <Toolbar>
                  <Group $gap={8}><SelectAll /><Caret /></Group>
                  <Group $gap={23}>
                    <Angle double /><Angle />
                    <Group $gap={6}>1 - 30 on 1596<Caret /></Group>
                    <Angle right /><Angle right double />
                  </Group>
                  <Group $gap={29}>
                    <Group $gap={9}>Sorted by relevancy<SortIcon /></Group>
                    <Group $gap={4}><GridIcon /><Caret /></Group>
                  </Group>
                </Toolbar>
                <Cards>
                  {CARDS.map((c) => <Card key={c.title} {...c} />)}
                  {[1, 2, 3].map((n) => <CardBox key={n}><CardHead><CheckCell /></CardHead></CardBox>)}
                </Cards>
              </section>
            </Columns>
          </Main>
          <Footer>
            <FootItem $w={232} $dark>Powered by GeoNetwork 4.0.6.0</FootItem>
            <FootItem $w={69}>About</FootItem>
            <FootItem $w={91}><Icon name="github" />Github</FootItem>
            <FootItem $w={53}>API</FootItem>
            <FootItem $w={158} $dark>Share on social sites</FootItem>
            <FootItem $w={44}><Icon name="twitter" /></FootItem>
            <FootItem $w={37}><Icon name="facebook" /></FootItem>
            <FootItem $w={43}><Icon name="linkedin" /></FootItem>
            <FootItem $w={45}><Icon name="mail" /></FootItem>
            <FootItem $w={20}><Icon name="link" /></FootItem>
          </Footer>
          <MapPanel>
            <MapDrawing />
            <MapTools><MapTool $w={42}><Icon name="pencil" /></MapTool><MapTool $w={26}><Caret /></MapTool></MapTools>
            <Attribution>© <a>OpenStreetMap</a> contributors.</Attribution>
          </MapPanel>
          <MapTab><Vertical>MAP</Vertical>
            <svg width="8" height="9" viewBox="0 0 8 9" fill="none" stroke="#fff" strokeWidth="1.200"><path d="M.5 4.400L4 1.200L7.500 4.400M.5 8.200L4 5L7.500 8.200" /></svg>
          </MapTab>
        </Page>
        <ScrollThumb $h={298} />
      </Screen>
    </>
  );
}
